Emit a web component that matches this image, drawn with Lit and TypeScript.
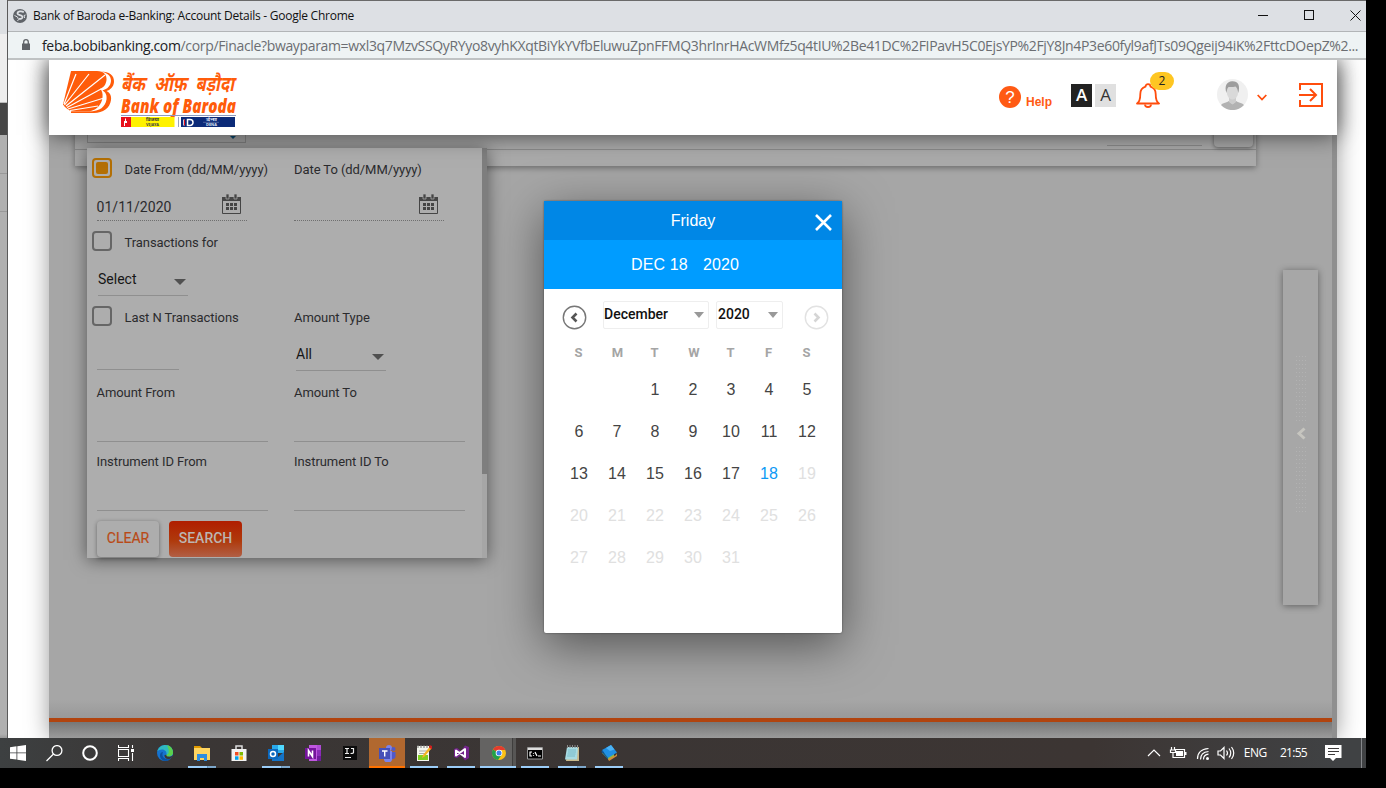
import { LitElement, html, css, svg, nothing, TemplateResult } from "lit";
import { customElement, property } from "lit/decorators.js";
import { classMap } from "lit/directives/class-map.js";

/* ---------- Browser window chrome ---------- */
@customElement("window-bars")
class WindowBars extends LitElement {
  static styles = css`
    :host { display: block; font-family: "Open Sans", sans-serif; }
    .title { box-sizing: border-box; height: 32px; display: flex; align-items: center; background: #dde0e4; border-top: 1px solid #6a6a6a; border-bottom: 1px solid #b2b5b7; padding-left: 5px; font-size: 12px; color: #111; letter-spacing: -0.25px; }
    .name { margin-left: 6px; flex: 1; padding-bottom: 1px; }
    .controls { display: block; }
    .url { box-sizing: border-box; height: 28px; display: flex; align-items: center; background: #eef3f4; border-bottom: 2px solid #bfc2c3; padding-left: 14px; font-size: 14px; letter-spacing: -0.345px; white-space: nowrap; overflow: hidden; color: #202124; }
    .addr { margin-left: 12px; }
    .path { color: #6b6e72; }
  `;
  render() {
    return html`
      <div class="title">
        <svg width="14" height="14" viewBox="0 0 14 14"><circle cx="7" cy="7" r="7" fill="#5f6368"/><path d="M10.800 3.200C8.500 1.600 4.300 2.200 4.500 4.600c.1 1.900 5.200 1.300 5 3.600-.1 1.500-2 1.800-3.500 1.600" fill="none" stroke="#dde0e4" stroke-width="1.700"/><path d="M1.500 6.500l3 1.500 1 2.500-1 1.500M12.600 6l-1.600.5.600 2.500" fill="none" stroke="#dde0e4"/></svg>
        <span class="name">Bank of Baroda e-Banking: Account Details - Google Chrome</span>
        <svg class="controls" width="110" height="30" fill="none" stroke="#111"><path d="M2 14.500h10M94.500 9.500l10 10M104.500 9.500l-10 10"/><rect x="48.500" y="9.500" width="9" height="9"/></svg>
      </div>
      <div class="url">
        <svg width="8" height="12" viewBox="0 0 8 12"><path d="M0 4.500h8V11H0z" fill="#5f6368"/><path d="M1.700 5V3a2.300 2.300 0 0 1 4.600 0v2" fill="none" stroke="#5f6368" stroke-width="1.300"/></svg>
        <span class="addr">feba.bobibanking.com<span class="path">/corp/Finacle?bwayparam=wxl3q7MzvSSQyRYyo8vyhKXqtBiYkYVfbEluwuZpnFFMQ3hrInrHAcWMfz5q4tIU%2Be41DC%2FIPavH5C0EjsYP%2FjY8Jn4P3e60fyl9afJTs09Qgeij94iK%2FttcDOepZ%2...</span></span>
      </div>`;
  }
}

/* ---------- Bank header ---------- */
@customElement("bank-header")
class BankHeader extends LitElement {
  static styles = css`
    :host { display: flex; box-sizing: border-box; height: 75px; background: #fff; padding-right: 14px; align-items: flex-start; box-shadow: 0 0 22px rgba(0,0,0,.62); font-family: Roboto, sans-serif; }
    svg { display: block; }
    .grow { flex: 1; }
    .help { display: flex; color: #ff5a14; font: 700 12px "Liberation Sans", sans-serif; margin: 26px 19px 0 0; gap: 5px; }
    .help span { line-height: 33px; }
    .q { width: 22px; height: 22px; border-radius: 50%; background: #ff5a14; color: #fff; font: 17px/23px "Liberation Sans", sans-serif; text-align: center; }
    .size { width: 21px; height: 23px; margin-top: 24px; text-align: center; font: 17px/22px "Open Sans", sans-serif; }
    .dark { background: #222; color: #fff; font-weight: 600; margin-right: 3px; }
    .light { background: #e0e0e0; color: #333; }
    .bell { position: relative; margin: 23px 0 0 20px; width: 24px; }
    .badge { position: absolute; left: 14px; top: -11px; width: 24px; height: 18px; border-radius: 9px; background: #fec622; color: #222; font: 12px/18px "Open Sans", sans-serif; text-align: center; }
    .avatar { margin: 19px 0 0 57px; }
    .down { margin: 34px 0 0 9px; }
    .exit { margin: 23px 0 0 32px; }
  `;
  render() {
    return html`
      <svg width="195" height="75" viewBox="49 60 195 75">
        <g fill="#ff5c0a">
          <path d="M71 71h26c7 0 10 4 9.500 9-.4 4.500-3 7.500-6.500 9 2 1.500 3 4 2.500 8.500-.8 6.500-5 12-13 14H72c-4-1.500-7-4-9-7z"/>
          <path d="M101 71.500c8 0 13.500 4 13 10.500-.4 5-4 8-7.500 9 3.500 1.500 5 5 4.500 9-1 8-8 13-17 13H71v-1.500h18c11 0 16.500-5 17.500-12 .6-4.500-1-7.500-4-9 5-1.500 8-4.500 8.500-9.500.3-5-4-8.500-10-9.500z"/>
        </g>
        <path d="M64 104L76 74M64.500 105L89 74M66 106L105 75M67 107.500L101 89M68 109L104 98M70 110.500L98 106" stroke="#fff" stroke-width="1.200"/>
        <g fill="#ff5c0a" font-weight="700" font-style="italic">
          <text transform="translate(121 90.500) scale(1 1.220)" font-family="'Noto Sans Devanagari','Noto Sans',sans-serif" font-size="17" textLength="113" lengthAdjust="spacingAndGlyphs" word-spacing="5">बैंक ऑफ़ बड़ौदा</text>
          <text x="121" y="112.500" font-family="'Open Sans',sans-serif" font-size="19" font-weight="800" textLength="115" lengthAdjust="spacingAndGlyphs">Bank of Baroda</text>
        </g>
        <path d="M121 115.500h115" stroke="#8d9bc0"/><path d="M178.500 117v10" stroke="#9aa3bd"/>
        <path d="M121 117h10v10h-10z" fill="#e8101c"/><path d="M125 119l1-1v3h1v2h-2v3h-1v-5h1z" fill="#fff"/>
        <path d="M131 117h43.500v10H131z" fill="#fff200"/><path d="M181 117h54v10h-54z" fill="#0b2a78"/>
        <path d="M184 119.500v6M187.500 119.500h2.500a3 3 0 0 1 0 6h-2.500z" fill="none" stroke="#fff" stroke-width="1.500"/><path d="M184.500 119.500v6" stroke="#e8101c"/>
        <g font-family="'Noto Sans Devanagari','Noto Sans',sans-serif" font-size="4" font-weight="700"><text x="146" y="121.300" fill="#333" textLength="13" lengthAdjust="spacingAndGlyphs">विजया</text><text x="146" y="126.300" fill="#444" textLength="13" lengthAdjust="spacingAndGlyphs">VIJAYA</text><text x="206" y="121.300" fill="#dfe5f5" textLength="11" lengthAdjust="spacingAndGlyphs">देना</text><text x="206" y="126.300" fill="#dfe5f5" textLength="11" lengthAdjust="spacingAndGlyphs">DENA</text></g>
        <path d="M203 122.300h16" stroke="#8d9bc0" stroke-width=".5"/>
      </svg>
      <div class="grow"></div>
      <div class="help"><div class="q">?</div><span>Help</span></div>
      <div class="size dark">A</div><div class="size light">A</div>
      <div class="bell">
        <svg width="24" height="26" viewBox="0 0 24 26" fill="none" stroke="#ff4d0d" stroke-width="1.800" stroke-linejoin="round"><path d="M1 20.500c2.500-1.500 3.300-3.500 3.300-9.500 0-4.500 2.700-6.500 5.200-7.300a2.500 2.500 0 0 1 5 0c2.500.8 5.200 2.800 5.200 7.300 0 6 .8 8 3.300 9.500z"/><path d="M9 21.500a3 2.500 0 0 0 6 0"/></svg>
        <div class="badge">2</div>
      </div>
      <svg class="avatar" width="31" height="31" viewBox="0 0 31 31"><circle cx="15.500" cy="15.500" r="15.500" fill="#f0f0f0"/><path d="M4 26c2-2.500 6-2 7.500-4l4 3 4-3c1.500 2 5.500 1.500 7.500 4a15.500 15.500 0 0 1-23 0z" fill="#b2b2b2"/><path d="M12 18h7v5l-3.500 2.500L12 23z" fill="#cdcdcd"/><ellipse cx="15.500" cy="13" rx="5.700" ry="7.500" fill="#d9d9d9"/><path d="M9.500 14C7 7 10 2.500 15 2.300c6-.3 8.500 4 6.300 11.700C20.500 10 20 8.500 18.500 7.500c-2.500.8-5.500.5-7 .5-1.300 1.500-1.700 3.500-2 6z" fill="#9d9d9d"/></svg>
      <svg class="down" width="10" height="8" fill="none" stroke="#ff4d0d" stroke-width="1.800"><path d="M.7 1L5 5.500 9.300 1"/></svg>
      <svg class="exit" width="24" height="24" viewBox="0 0 24 24" fill="none" stroke="#ff4d0d" stroke-width="2"><path d="M1 7V1h22v22H1v-6M0 12h16M11 6l6 6-6 6"/></svg>`;
  }
}

/* ---------- Search filter panel ---------- */
@customElement("filter-panel")
class FilterPanel extends LitElement {
  static styles = css`
    :host { display: flex; box-sizing: border-box; width: 400px; height: 410px; background: #adadad; font: 13px Roboto, sans-serif; color: #2b2b2d; box-shadow: 0 2px 16px rgba(0,0,0,.5); letter-spacing: -.07px; }
    .form { flex: 1; padding-left: 5px; }
    .row { display: grid; grid-template-columns: 202px 1fr; align-items: center; }
    .c { display: flex; align-items: center; gap: 12.500px; }
    .pad { padding-left: 4.500px; }
    .h40 { height: 42px; } .h39 { height: 38px; margin-bottom: 2px; }
    .end { align-items: end; }
    .box { width: 16px; height: 16px; border: 2px solid #666; border-radius: 4px; margin-top: -2px; }
    .on { border-color: #b36f04; display: grid; place-items: center; }
    .on i { width: 12px; height: 12px; border-radius: 2px; background: #b36f04; }
    .date { box-sizing: border-box; height: 31px; width: 150px; border-bottom: 1px dotted #6f6f6f; display: flex; justify-content: space-between; padding: 4px 6px 0 0; font-size: 14px; letter-spacing: .05px; line-height: 27px; margin-left: 5px; }
    .date span { margin-left: -.5px; }
    .second { margin-left: 0; padding-right: 6px; }
    .sel { box-sizing: border-box; width: 90px; height: 33px; border-bottom: 1px solid #8f8f8f; display: flex; justify-content: space-between; font-size: 14px; letter-spacing: 0; line-height: 33px; padding-right: 2px; margin-left: 6px; color: #161616; }
    .all { margin-left: 2px; }
    .sel svg { margin-top: 16px; }
    .line { border-bottom: 1px solid #8f8f8f; height: 28px; width: 171px; margin-left: 5px; }
    .l2 { margin-left: 0; } .short { width: 82px; height: 31px; margin-bottom: 1px; }
    .btns { display: flex; gap: 10px; padding: 10px 0 0 5px; letter-spacing: 0; }
    .btn { height: 36px; border-radius: 4px; font: 500 14px/35px Roboto, sans-serif; text-align: center; }
    .clear { width: 62px; font-weight: 400; color: #b94a17; box-shadow: 0 1px 4px rgba(0,0,0,.4); -webkit-text-stroke: .2px #b94a17; }
    .search { width: 73px; color: #bcb5b2; background: linear-gradient(#b01e00, #af3a0c 55%, #b15f45); }
    .bar { width: 5px; height: 410px; background: linear-gradient(#7e7e7e 0 326px, #a6a6a6 326px); }
  `;
  private cal = () => svg`<svg width="19" height="21" viewBox="0 0 19 21"><path d="M.5 3.500h18v16H.5z" fill="none" stroke="#454545"/><path d="M0 3h19v4H0z" fill="#454545"/><path d="M4 0h3v5H4zM12 0h3v5h-3z" fill="#454545" stroke="#adadad" stroke-width=".7"/><path d="M4 9h3v3H4zm4 0h3v3H8zm4 0h3v3h-3zM4 13h3v3H4zm4 0h3v3H8zm4 0h3v3h-3z" fill="#454545"/></svg>`;
  private tri = () => svg`<svg width="12" height="6"><path d="M0 0h12L6 6z" fill="#505050"/></svg>`;
  render() {
    const box = html`<div class="box"></div>`;
    return html`
      <div class="form">
        <div class="row h40"><div class="c"><div class="box on"><i></i></div><span>Date From (dd/MM/yyyy)</span></div><span>Date To (dd/MM/yyyy)</span></div>
        <div class="row"><div class="date"><span>01/11/2020</span>${this.cal()}</div><div class="date second"><span></span>${this.cal()}</div></div>
        <div class="row h40"><div class="c">${box}<span>Transactions for</span></div></div>
        <div class="row"><div class="sel"><span>Select</span>${this.tri()}</div></div>
        <div class="row h40"><div class="c">${box}<span>Last N Transactions</span></div><span>Amount Type</span></div>
        <div class="row end"><div class="line short"></div><div class="sel all"><span>All</span>${this.tri()}</div></div>
        <div class="row h40"><span class="pad">Amount From</span><span>Amount To</span></div>
        <div class="row"><div class="line"></div><div class="line l2"></div></div>
        <div class="row h39"><span class="pad">Instrument ID From</span><span>Instrument ID To</span></div>
        <div class="row"><div class="line"></div><div class="line l2"></div></div>
        <div class="btns"><div class="btn clear">CLEAR</div><div class="btn search">SEARCH</div></div>
      </div>
      <div class="bar"></div>`;
  }
}

/* ---------- Date picker dialog ---------- */
@customElement("date-picker")
class DatePicker extends LitElement {
  @property({ type: Number }) selected = 18;
  static styles = css`
    :host { display: block; box-sizing: border-box; width: 298px; height: 432px; background: #fff; border-radius: 2px; font: 16px "Liberation Sans", sans-serif; box-shadow: 0 12px 48px rgba(0,0,0,.5), 0 0 2px rgba(0,0,0,.5); }
    .day { height: 39px; background: #0087e6; color: #fff; display: grid; grid-template-columns: 1fr 27px; align-items: center; line-height: 39px; }
    .day span { text-align: center; padding-left: 27px; }
    .day svg { margin: 3px 0 0 0; }
    .date { height: 49px; background: #009cff; color: #fff; display: flex; padding-left: 87px; gap: 15px; line-height: 50px; letter-spacing: .15px; }
    .nav { display: flex; padding: 12px 13px 0 17.500px; height: 28px; font: 500 14px/27px Roboto, sans-serif; color: #111; }
    .arrow { margin-top: 4px; }
    .drop { box-sizing: border-box; height: 28px; border: 1px solid #eee; border-radius: 2px; display: flex; justify-content: space-between; align-items: center; padding: 0 4px 0 0; line-height: 24px; }
    .drop span { margin-top: -2px; }
    .month { width: 106px; margin-left: 16.500px; }
    .year { width: 67px; margin-left: 7px; margin-right: 20.500px; padding-left: 1px; }
    .week, .grid { display: grid; grid-template-columns: repeat(7, 38px); padding-left: 16px; text-align: center; }
    .week { font: 700 13px/24px Roboto, sans-serif; color: #a5a5a5; padding-top: 12px; height: 28px; }
    .week span { margin-left: -1px; }
    .week span:nth-child(2) { margin-left: 1px; }
    .week span:nth-child(4) { margin-left: 2px; }
    .grid { grid-auto-rows: 42px; line-height: 42px; color: #444; }
    .off { color: #e0e0e0; }
    .sel { color: #0d99f5; }
  `;
  private arrow(d: string, c: string, k: string) {
    return svg`<svg class="arrow" width="25" height="25" viewBox="0 0 25 25" fill="none" stroke=${c}><circle cx="12.500" cy="12.500" r="11.200" stroke-width="1.400"/><path d=${d} stroke=${k} stroke-width="2.600"/></svg>`;
  }
  render() {
    const tri = svg`<svg width="10" height="6"><path d="M0 0h10L5 6z" fill="#999"/></svg>`;
    const cells = [0, 0, ...Array.from({ length: 31 }, (_, i) => i + 1)];
    return html`
      <div class="day"><span>Friday</span><svg width="17" height="17" stroke="#fff" stroke-width="2.600"><path d="M1 1l15 15M16 1L1 16"/></svg></div>
      <div class="date"><span>DEC 18</span><span>2020</span></div>
      <div class="nav">
        ${this.arrow("M14.500 8.500L10.500 12.500l4 4", "#777", "#555")}
        <div class="drop month"><span>December</span>${tri}</div>
        <div class="drop year"><span>2020</span>${tri}</div>
        ${this.arrow("M10.500 8.500l4 4-4 4", "#e2e2e2", "#d5d5d5")}
      </div>
      <div class="week">${["S", "M", "T", "W", "T", "F", "S"].map((d) => html`<span>${d}</span>`)}</div>
      <div class="grid">${cells.map((n) => html`<div class=${classMap({ off: n > this.selected, sel: n === this.selected })}>${n || nothing}</div>`)}</div>`;
  }
}

/* ---------- Windows task bar ---------- */
type App = { icon: TemplateResult; mark?: string };
const FLOOR = "on", STACK = "stack";
const APPS: App[] = [
  { icon: svg`<circle cx="8" cy="8" r="8" fill="#1572cf"/><path d="M.3 6.500C1.500 2 5 0 8.500 0 13 0 16 3.500 16 7.500c0 3-2.500 4-5 4-1.500 0-2-1-1.500-2C10 7 8 4.500 5 4.500c-2 0-4 .8-4.700 2z" fill="#2fb9c0"/><path d="M10 .3c3.500.6 6 3.700 6 7.200 0 3-2.500 4-5 4-1 0-2-.7-1.500-1.800C13 9 12 4 10 .3z" fill="#5bd14c"/><path d="M6 7c-2 4 1 8 7.500 7-5 4-11 1-10.500-4C3.200 8 4.500 7 6 7z" fill="#0c4f9e"/><path d="M9.500 9.700c-.5 1 .3 1.900 1.500 1.900 2 .2 3.500-.3 4.500-1.200-.3 1.500-1 2.300-1.800 3C10 15 7 13 7.500 10z" fill="#3c3634"/>` },
  { icon: svg`<path d="M0 1h6l2 2h-8z" fill="#e09a00"/><path d="M0 3h16v12H0z" fill="#ffd560"/><path d="M3 9h10v7h-3v-3H6v3H3z" fill="#2f8ee0"/>`, mark: STACK },
  { icon: svg`<path d="M5 4V1h6v3" fill="none" stroke="#ddd" stroke-width="1.500"/><path d="M.5 4h15v12H.5z" fill="#f2f2f2"/><path d="M4 7h3.500v3.500H4z" fill="#f04e23"/><path d="M8.500 7H12v3.500H8.500z" fill="#7fba00"/><path d="M4 11.300h3.500v3.500H4z" fill="#00a3ee"/><path d="M8.500 11.300H12v3.500H8.500z" fill="#ffb700"/>` },
  { icon: svg`<path d="M4 0h12v8H4z" fill="#28a8ea"/><path d="M10 0h6v5h-6z" fill="#50d9ff"/><path d="M4 8l6 4 6-5v9H4z" fill="#1373c8"/><path d="M0 4h10v10H0z" fill="#0a68be"/><circle cx="5" cy="9" r="2.500" fill="none" stroke="#fff" stroke-width="1.500"/>`, mark: STACK },
  { icon: svg`<path d="M4 0h9v16H4z" fill="#c057e0"/><path d="M12 0h4v5h-4z" fill="#ae4bd5"/><path d="M12 5h4v6h-4z" fill="#8b2cb8"/><path d="M12 11h4v5h-4z" fill="#6f1b9c"/><path d="M0 3h11v11H0z" fill="#74149b"/><path d="M3.500 11.500v-6l4 6v-6" fill="none" stroke="#fff" stroke-width="1.600"/>` },
  { icon: svg`<path d="M1 1h14v14H1z" fill="#0c0c0c"/><path d="M3 3.500h4M5 3.500v5M3 8.500h4M9 3.500h2.500v4q0 1-3 1M3 12.500h6" fill="none" stroke="#eee" stroke-width="1.200"/>` },
  { icon: svg`<circle cx="10" cy="3" r="3" fill="#7b83eb"/><circle cx="14.500" cy="4" r="2" fill="#5059c9"/><path d="M5 6h8v6a4 4 0 0 1-8 3z" fill="#7b83eb"/><path d="M13 7h3.500v5a3 3 0 0 1-3.500 2z" fill="#5059c9"/><path d="M0 3h11v11H0z" fill="#4550b8"/><path d="M3 6h5.500M5.700 6v5.500" stroke="#fff" stroke-width="1.400"/>`, mark: "alert" },
  { icon: svg`<path d="M1 1h12v15H1z" fill="#f4f6ee"/><path d="M1.500 0h1v3h-1zm3 0h1v3h-1zm3 0h1v3h-1zm3 0h1v3h-1z" fill="#777"/><path d="M3 6h8M3 8.500h6" stroke="#aaa"/><path d="M2 10h10v5H2z" fill="#7fcf20"/><path d="M6 13l1-3 6.500-8 2 1.500-7 8z" fill="#f5b325"/><path d="M13.500 0l2.500 1v3.500L13 2.500z" fill="#cf1f1f"/>`, mark: FLOOR },
  { icon: svg`<path d="M1 4l3-1 4 3 4-5.500L16 2v11l-4 2.500L8 10l-4 3-3-1z" fill="#74248c"/><path d="M3 5.500v5l9-6.500v8z" fill="none" stroke="#fff" stroke-width="2" stroke-linejoin="round"/>`, mark: FLOOR },
  { icon: svg`<circle cx="9" cy="8" r="7" fill="#fbc116"/><path d="M9 8L3 4.500A7 7 0 0 1 15.300 5H9z" fill="#e33b2e"/><path d="M9 8L2.900 4.500A7 7 0 0 0 8 15l3.500-5z" fill="#23a04a"/><circle cx="9" cy="8" r="3.300" fill="#fff"/><circle cx="9" cy="8" r="2.500" fill="#3f80ee"/>`, mark: "active" },
  { icon: svg`<path d="M.5 2.500h15v11.500H.5z" fill="#000" stroke="#999"/><path d="M1 3h14v2H1z" fill="#ddd"/><path d="M5 7H3v4h2M6.500 8v.8M6.500 10.200v.8M8 7l2 4M11 11h3" stroke="#fff" fill="none" stroke-width="1.200"/>`, mark: FLOOR },
  { icon: svg`<path d="M4 2h11v14H2z" fill="#c9b98c"/><path d="M3 2h11l-1 12.500H1z" fill="#a8dbe2"/><path d="M4 5h8M4 7h8M3.500 9h8M3 11h8" stroke="#6cb4c4" stroke-width=".8"/><path d="M3.500 0v3M6 0v3M8.500 0v3M11 0v3M13.500 0v3" stroke="#888"/>`, mark: STACK },
  { icon: svg`<path d="M1 8l7 7 5-3V9z" fill="#8dbb3f"/><path d="M7 14l8-4 1-2v3l-8 5z" fill="#cf8a3a"/><path d="M1 5l9-5 6 7.500L7 13z" fill="#1f90e4"/><path d="M5 3l5-3 3.500 4.500L9 6z" fill="#4ab2f5"/><path d="M1 5l6 8v1.500L.5 7z" fill="#0c579c"/>`, mark: FLOOR },
];

@customElement("task-bar")
class TaskBar extends LitElement {
  static styles = css`
    :host { display: flex; box-sizing: border-box; width: 1366px; height: 30px; background: linear-gradient(90deg, #3d4041, #3a3635 12%, #3c3533 80%, #404244 98%); font: 12px "Open Sans", sans-serif; color: #fff; }
    .slot { box-sizing: border-box; width: 36px; height: 30px; display: flex; justify-content: center; padding-top: 7px; }
    .apps { display: flex; gap: 1px; margin-left: 3px; flex: 1; }
    .app { background: bottom / 28px 2px no-repeat; }
    .on { background-image: linear-gradient(#9bcdf8, #9bcdf8); }
    .stack { background-image: linear-gradient(90deg, #9bcdf8 19px, #6794b8 19px 20px, #7da7cb 20px); }
    .alert { background: linear-gradient(#b1682f 28px, #ff7200 28px); }
    .active { background: linear-gradient(#9bcdf8, #9bcdf8) bottom / 36px 2px no-repeat, linear-gradient(90deg, #646362 32px, #3f3e3d 32px 33px, #575655 33px); }
    .text { line-height: 30px; }
    .tray { display: block; }
    .eng { margin-left: 7px; letter-spacing: -.4px; } .time { margin: 0 17.500px 0 13px; letter-spacing: -.7px; }
    .peek { width: 5px; margin-left: 19.500px; border-left: 1px solid #85878a; box-sizing: border-box; }
  `;
  render() {
    return html`
      <div class="slot"><svg width="16" height="16" fill="#fff"><path d="M0 2.200L6.500 1.300v6.200H0zM7.300 1.200L16 0v7.500H7.300zM0 8.300h6.500v6.300L0 13.700zM7.300 8.300H16V16l-8.700-1.200z"/></svg></div>
      <div class="slot"><svg width="17" height="17" fill="none" stroke="#fff" stroke-width="1.300"><circle cx="11" cy="5.500" r="4.900"/><path d="M7.500 9L.5 16"/></svg></div>
      <div class="slot"><svg width="16" height="16" fill="none" stroke="#fff" stroke-width="2"><circle cx="8" cy="8" r="6.800"/></svg></div>
      <div class="slot"><svg width="16" height="16" fill="none" stroke="#fff" stroke-width="1.100"><path d="M.5 0v2.500h10V0M.5 4.500h10v7H.5zM.5 16v-2.500h10V16M14.500 0v3M14.500 8v8"/><path d="M13 4h3v3h-3z" fill="#fff" stroke="none"/></svg></div>
      <div class="apps">${APPS.map((a) => html`<div class="slot app ${a.mark ?? ""}"><svg width="17" height="17" viewBox="0 0 17 17">${a.icon}</svg></div>`)}</div>
      <svg class="tray" width="90" height="30" viewBox="1147 738 90 30" fill="none" stroke="#fff" stroke-width="1.200">
        <path d="M1148 756l6-6 6 6"/>
        <path d="M1175 749.500h9.500v8H1175M1171.500 747v3M1174.500 747v3M1170.500 750h5v2.500h-5zM1173 752v5.500h3"/><path d="M1176 751h7v5h-7zM1185 752h1.500v3h-1.500z" fill="#fff" stroke="none"/>
        <path d="M1197.500 759c0-6 4-10 11-10.500M1200.500 759.500c0-4.500 3-7.500 8-8M1203.500 759.500c0-3 2-5 5-5.300"/><circle cx="1207.500" cy="758.500" r="1.500" fill="#fff" stroke="none"/>
        <path d="M1218 751h2.500l3.500-3.500v11l-3.500-3.500h-2.500zM1226.500 750.500q2 2.500 0 5M1229 748.500q3.500 4.500 0 9M1231.500 747q4.500 6 0 12"/>
      </svg>
      <span class="text eng">ENG</span><span class="text time">21:55</span>
      <svg class="tray" width="17" height="30"><path d="M0 7h16.500v13H11l-3 3-3-3H0z" fill="#fff"/><path d="M3 10.500h11M3 13.500h11M3 16.500h7" stroke="#3d3b3b"/></svg>
      <div class="peek"></div>`;
  }
}

/* ---------- Desktop ---------- */
@customElement("app-root")
class AppRoot extends LitElement {
  static styles = css`
    :host { display: block; width: 1386px; height: 788px; background: #000; overflow: hidden; }
    .screen { width: 1366px; height: 738px; display: flex; overflow: hidden; }
    .behind { width: 7px; border-right: 1px solid #5a5a5a; background: linear-gradient(#dcdfe2 0 34px, #eee 34px 102px, #bbb 102px 103px, #464646 103px 135px, #b0b0b0 135px 173px, #999 173px 174px, #b0b0b0 174px 211px, #999 211px 212px, #b0b0b0 212px 734px, #999); }
    .window { width: 1358px; background: #fff; }
    .view { height: 678px; position: relative; overflow: hidden; padding: 0 29px 0 41px; }
    .page { position: relative; height: 678px; width: 1283px; background: #a6a6a6; border-right: 5px solid #8f8f8f; box-shadow: 0 0 22px rgba(0,0,0,.4); }
    bank-header { position: absolute; left: 41px; top: 0; width: 1288px; z-index: 2; }
    .card { position: absolute; left: 26px; top: 60px; width: 1181px; height: 46px; box-sizing: border-box; background: #aaa; box-shadow: 0 2px 6px rgba(0,0,0,.35); }
    .rule { margin-top: 28px; border-bottom: 1px solid #8b8b8b; border-top: 0; height: 1px; }
    .field { position: absolute; left: 12px; top: 0; width: 157px; height: 21px; border: 1px solid #8c8c8c; }
    .caret { position: absolute; right: 9px; top: 15px; border: 3px solid transparent; border-top-color: #0d4b70; border-bottom: 0; }
    .under { position: absolute; left: 1032px; top: 25px; width: 95px; height: 1px; background: #8b8b8b; }
    .knob { position: absolute; left: 1139px; top: 0; width: 39px; height: 27px; border-radius: 4px; background: #a6a6a6; box-shadow: 0 1px 4px rgba(0,0,0,.45); }
    filter-panel { position: absolute; left: 38px; top: 88px; }
    .drawer { position: absolute; left: 1234px; top: 210px; width: 35px; height: 335px; background: #a7a7a7; box-shadow: 0 1px 7px rgba(0,0,0,.42); display: flex; flex-direction: column; align-items: center; padding-top: 86px; box-sizing: border-box; }
    .dots { width: 10px; height: 66px; background: linear-gradient(#b2b2b2, #b2b2b2) 0 0 / 1px 4px; background: conic-gradient(from 0deg at 1px 1px, transparent 270deg, #b2b2b2 0) 0 0 / 3px 4px; }
    .drawer svg { margin: 5px 0 7px; }
    .foot { position: absolute; left: 0; right: 0; bottom: 0; height: 38px; background: linear-gradient(#a6a6a6, #999 18px, #b1440f 18px 22px, #777 22px, #9b9b9b); }
    date-picker { position: absolute; left: 536px; top: 141px; z-index: 3; }
  `;
  render() {
    return html`
      <div class="screen">
        <div class="behind"></div>
        <div class="window">
          <window-bars></window-bars>
          <div class="view">
            <div class="page">
              <div class="card"><div class="rule"></div><div class="field"><div class="caret"></div></div><div class="under"></div><div class="knob"></div></div>
              <div class="drawer"><div class="dots"></div><svg width="10" height="13" fill="none" stroke="#c6c5bf" stroke-width="3"><path d="M8.500 1.500L3 6.500l5.500 5"/></svg><div class="dots"></div></div>
              <div class="foot"></div>
              <filter-panel></filter-panel>
            </div>
            <bank-header></bank-header>
            <date-picker></date-picker>
          </div>
        </div>
      </div>
      <task-bar></task-bar>`;
  }
}
